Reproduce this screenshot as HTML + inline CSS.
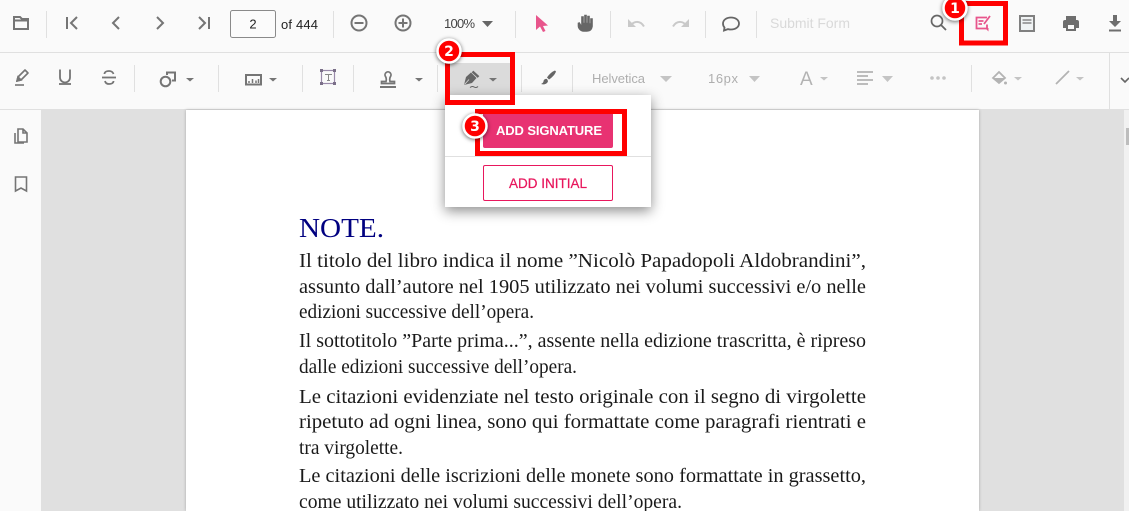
<!DOCTYPE html>
<html><head><meta charset="utf-8"><style>
html,body{margin:0;padding:0;width:1129px;height:511px;overflow:hidden;background:#e0e0e0}
div,svg{position:absolute}
svg{left:0;top:0}
.pg text{font-family:"Liberation Serif",serif;font-size:19.5px;fill:#1a1a1a}
</style></head><body>
<div style="left:0;top:0;width:1129px;height:110px;background:#fafafa"></div>
<div style="left:0;top:52px;width:1129px;height:1px;background:#e0e0e0"></div>
<div style="left:0;top:109px;width:1129px;height:1px;background:#e0e0e0"></div>
<div style="left:0;top:110px;width:41px;height:401px;background:#fafafa"></div>
<div style="left:186px;top:110px;width:793px;height:401px;background:#fff;box-shadow:0 0 3px rgba(0,0,0,.25)"></div>
<div style="left:1124px;top:110px;width:5px;height:401px;background:#f1f1f1"></div>
<div style="left:1126px;top:128px;width:3px;height:17px;background:#bdbdbd"></div>
<div style="left:450px;top:63px;width:60px;height:33px;background:#dbdbdb"></div>

<svg class="pg" width="1129" height="511" viewBox="0 0 1129 511">
<text x="299" y="237" textLength="85" lengthAdjust="spacingAndGlyphs" style="font-size:27px;fill:#000080">NOTE.</text>
<text x="299" y="267" textLength="567" lengthAdjust="spacingAndGlyphs">Il titolo del libro indica il nome ”Nicolò Papadopoli Aldobrandini”,</text>
<text x="299" y="293" textLength="567" lengthAdjust="spacingAndGlyphs">assunto dall’autore nel 1905 utilizzato nei volumi successivi e/o nelle</text>
<text x="299" y="318" textLength="235" lengthAdjust="spacingAndGlyphs">edizioni successive dell’opera.</text>
<text x="299" y="347" textLength="567" lengthAdjust="spacingAndGlyphs">Il sottotitolo ”Parte prima...”, assente nella edizione trascritta, è ripreso</text>
<text x="299" y="373" textLength="278" lengthAdjust="spacingAndGlyphs">dalle edizioni successive dell’opera.</text>
<text x="299" y="403" textLength="567" lengthAdjust="spacingAndGlyphs">Le citazioni evidenziate nel testo originale con il segno di virgolette</text>
<text x="299" y="428" textLength="567" lengthAdjust="spacingAndGlyphs">ripetuto ad ogni linea, sono qui formattate come paragrafi rientrati e</text>
<text x="299" y="454" textLength="104" lengthAdjust="spacingAndGlyphs">tra virgolette.</text>
<text x="299" y="482" textLength="567" lengthAdjust="spacingAndGlyphs">Le citazioni delle iscrizioni delle monete sono formattate in grassetto,</text>
<text x="299" y="508" textLength="383" lengthAdjust="spacingAndGlyphs">come utilizzato nei volumi successivi dell’opera.</text>
</svg>

<svg width="1129" height="511" viewBox="0 0 1129 511" fill="none">
<!-- separators -->
<g fill="#e0e0e0">
<rect x="46" y="11" width="1" height="27"/><rect x="333" y="11" width="1" height="27"/><rect x="515" y="11" width="1" height="27"/><rect x="610" y="11" width="1" height="27"/><rect x="705" y="11" width="1" height="27"/><rect x="756" y="11" width="1" height="27"/>
<rect x="134" y="65" width="1" height="27"/><rect x="218" y="65" width="1" height="27"/><rect x="302" y="65" width="1" height="27"/><rect x="353" y="65" width="1" height="27"/><rect x="437" y="65" width="1" height="27"/><rect x="521" y="65" width="1" height="27"/><rect x="572" y="65" width="1" height="27"/><rect x="971" y="65" width="1" height="27"/><rect x="1109" y="53" width="1" height="56"/>
</g>
<!-- row 1 -->
<g stroke="#757575" stroke-width="2">
<path d="M14 17h6l2 2h6v10H14zM14 20.500h14"/>
<path d="M67 17v12M77 17l-6 6 6 6M119 17l-6 6 6 6M157 17l6 6-6 6M199 17l6 6-6 6M209 17v12"/>
<circle cx="359" cy="23" r="7.5"/><path d="M354.500 23h9"/>
<circle cx="403" cy="23" r="7.5"/><path d="M398.500 23h9M403 18.500v9"/>
<path d="M724.500 27.500c-1-1-1.500-2.500-1.500-4 0-3.500 3.500-6 8-6s8 2.500 8 6-3.500 6-8 6c-1 0-2-.1-3-.4l-4 1.400z" stroke="#666" stroke-width="1.800"/>
<circle cx="937" cy="21" r="5.500" stroke="#666" stroke-width="1.700"/><path d="M941 25l5 5" stroke="#666" stroke-width="1.800"/>
</g>
<rect x="230.500" y="10.500" width="45" height="27" rx="2" stroke="#8a8a8a" fill="#fff" fill-opacity=".3"/>
<text x="253" y="28.500" font-size="13" fill="#222" text-anchor="middle" font-family="Liberation Sans">2</text>
<text x="281" y="29" font-size="13" fill="#222" font-family="Liberation Sans" textLength="37">of 444</text>
<text x="444" y="28" font-size="13" fill="#444" font-family="Liberation Sans" textLength="31">100%</text>
<path d="M482 21h11l-5.500 6z" fill="#666"/>
<path d="M536 15l12 10.500-5 .5 2.500 5-2.500 1-3-5.500-4 3.500z" fill="#e8558c"/>
<path d="M578 23v3c0 3 3 5.500 6 5.500h3c3 0 5-2 5.500-5V18.500h-2v5h-1V16h-2v7h-1V15h-2v8h-1v-6.500h-2V26l-2-3.500z" fill="#666" stroke="#666" stroke-width=".6"/>
<path d="M631 26c2-5 9-6 13 .5" stroke="#c9c9c9" stroke-width="2"/>
<path d="M628 19l0 8 8 0z" fill="#c9c9c9"/>
<path d="M686 26c-2-5-9-6-13 .5" stroke="#c9c9c9" stroke-width="2"/>
<path d="M689 19l0 8-8 0z" fill="#c9c9c9"/>
<text x="770" y="28" font-size="14" fill="#d9d9d9" font-family="Liberation Sans" textLength="80">Submit Form</text>
<path d="M987 17.500h-10.500v11h10.500v-4M978.500 21h5M978.500 24h3.500M984 24l6-8" stroke="#e8558c" stroke-width="1.800"/>
<path d="M985 28h3.500v3.500z" fill="#e8558c"/>
<rect x="1020" y="16" width="14" height="15" stroke="#808080" stroke-width="2" fill="#f0f3f4"/>
<path d="M1022.500 20h9M1022.500 23h9" stroke="#888" stroke-width="1.400"/>
<path d="M1066 16h10v4h-10zM1065 20h12a2 2 0 0 1 2 2v6h-3v3h-10v-3h-3v-6a2 2 0 0 1 2-2z" fill="#6e6e6e"/>
<rect x="1068" y="25" width="6" height="4" fill="#fafafa"/>
<path d="M1113 15h4v6h4l-6 6-6-6h4zM1109 29.500h12v2h-12z" fill="#6e6e6e"/>
<!-- row 2 -->
<g stroke="#757575" stroke-width="1.600">
<path d="M17 81l1-4 7-7 3 3-7 7z" stroke-linejoin="round"/><path d="M17 81l1-4 3 3z" fill="#757575"/><path d="M15 85h9"/>
<path d="M60 69.500v8a5 5 0 0 0 10 0v-8" stroke-width="1.800"/><path d="M59 84h12" stroke-width="1.800"/>
<path d="M102 77.500h14" stroke-width="1.800"/><path d="M113.500 74c-.5-2-2.500-3-4.500-3-2.500 0-4.500 1-4.500 3M105 81c.5 2 2 3 4 3 2.500 0 4.500-1 4.500-3" stroke-width="1.800"/>
<circle cx="165.500" cy="81.500" r="4.800" stroke-width="2"/><path d="M167 75v-2.500h8v8h-3" stroke-width="2"/>
<rect x="246" y="75" width="15" height="9.500" stroke-width="2"/>
<path d="M249 83v-2M252.500 83v-4M256 83v-2.500M258.500 83v-4" stroke-width="1.500"/>
<rect x="321.500" y="70.500" width="13" height="13" stroke="#9a8aaa" stroke-width="1.200"/>
<path d="M320 69h3v3h-3zM333 69h3v3h-3zM320 82h3v3h-3zM333 82h3v3h-3z" fill="#7a6f88" stroke="none"/>
<path d="M325 74.500h7M328.500 74.500v6M327 80.500h3" stroke="#888" stroke-width="1"/>
<path d="M380 87h16" stroke-width="2"/><path d="M381.500 83.500h13v-2h-4.500c-.5-2-.5-3.500.5-5a3 3 0 1 0-5 0c1 1.500 1 3 .5 5h-4.500z" stroke-width="1.700"/>
<path d="M464 85l2-8 5-4.500 5.500 5.500-4.500 5z" fill="#666" stroke="none"/><path d="M472.500 71.500l6 5.500" stroke="#666" stroke-width="2.400"/>
<path d="M464.500 84.500l4.500-5" stroke="#dbdbdb" stroke-width=".8"/>
<path d="M470 87.500c2-1.500 3-1 4.500-.3s2.500.3 3.500-.7" stroke-width="1" stroke="#666"/>
<path d="M555 70.500c-3 1-6 4-8 7l2 2c3-2 6-5 7-8z" fill="#666" stroke="none"/><path d="M547 79c-2-.5-3.500 1-3.500 2.500-.5 1.500-1.500 2-2.500 2.500 3 1 6.500 0 7-3z" fill="#666" stroke="none"/>
</g>
<g fill="#757575">
<path d="M186 78h8l-4 3.500zM269 78h8l-4 3.500zM415 78h8l-4 3.500zM489 78h8l-4 3.500z"/>
</g>
<text x="592" y="83" font-size="13" fill="#aeaeae" font-family="Liberation Sans" textLength="53">Helvetica</text>
<text x="708" y="83" font-size="13" fill="#aeaeae" font-family="Liberation Sans" textLength="30">16px</text>
<text x="800" y="85" font-size="19" fill="#b3b3b3" font-family="Liberation Sans">A</text>
<g fill="#c4c4c4">
<path d="M660 76h12l-6 6zM749 76h11l-5.500 6zM820 77h8l-4 3.500zM882 76h11l-5.500 6zM1014 77h8l-4 3.500zM1076 77h8l-4 3.500z"/>
<circle cx="932" cy="78" r="1.800"/><circle cx="938" cy="78" r="1.800"/><circle cx="944" cy="78" r="1.800"/>
</g>
<path d="M857 72h16M857 76h11M857 80h16M857 84h11" stroke="#b3b3b3" stroke-width="1.800"/>
<path d="M993 78l6-6 6 6-6 5z" stroke="#b3b3b3" stroke-width="1.800"/><path d="M994 78h10l-5 5z" fill="#b3b3b3"/><circle cx="1005.500" cy="83" r="1.500" fill="#b3b3b3"/>
<path d="M1056 84l13-13" stroke="#b3b3b3" stroke-width="1.800"/>
<path d="M1121 78l4 4 4-4" stroke="#666" stroke-width="1.600"/>
<!-- sidebar -->
<path d="M18 129h5l4 4v9h-9zM23 129v4h4M15 133v10h9" stroke="#757575" stroke-width="1.600"/>
<path d="M15.500 177h11v14l-5.500-3-5.500 3z" stroke="#757575" stroke-width="1.600"/>
<!-- box 1 -->
<rect x="961.500" y="3.500" width="44" height="39.500" stroke="#f00" stroke-width="5"/>
</svg>

<div style="left:445px;top:95px;width:206px;height:112px;background:#fff;box-shadow:0 4px 12px rgba(0,0,0,.45)"></div>
<div style="left:445px;top:156px;width:206px;height:1px;background:#e0e0e0"></div>
<div style="left:483px;top:112px;width:130px;height:36px;background:#e83272;border-radius:2px"></div>
<div style="left:483px;top:165px;width:128px;height:34px;border:1px solid #e8175d;border-radius:2px"></div>

<svg width="1129" height="511" viewBox="0 0 1129 511" fill="none">
<text x="496" y="135" font-size="13" font-weight="bold" fill="#fff" font-family="Liberation Sans" textLength="106">ADD SIGNATURE</text>
<text x="509" y="188" font-size="13.500" fill="#e8175d" stroke="#e8175d" stroke-width=".25" font-family="Liberation Sans" textLength="78">ADD INITIAL</text>
<rect x="447.500" y="54.500" width="65" height="48" stroke="#f00" stroke-width="5"/>
<rect x="477.500" y="111.500" width="147" height="42" stroke="#f00" stroke-width="5"/>
<g stroke="#fff" stroke-width="2.500" fill="#f00" style="filter:drop-shadow(0 1px 2px rgba(0,0,0,.6))">
<circle cx="955" cy="8" r="11.500"/><circle cx="449" cy="51" r="11.500"/><circle cx="475" cy="126" r="11.500"/>
</g>
<g fill="#fff" font-family="DejaVu Sans" font-weight="bold" font-size="14" text-anchor="middle">
<text x="955" y="13">1</text><text x="449" y="56">2</text><text x="475" y="131">3</text>
</g>
</svg>
</body></html>
